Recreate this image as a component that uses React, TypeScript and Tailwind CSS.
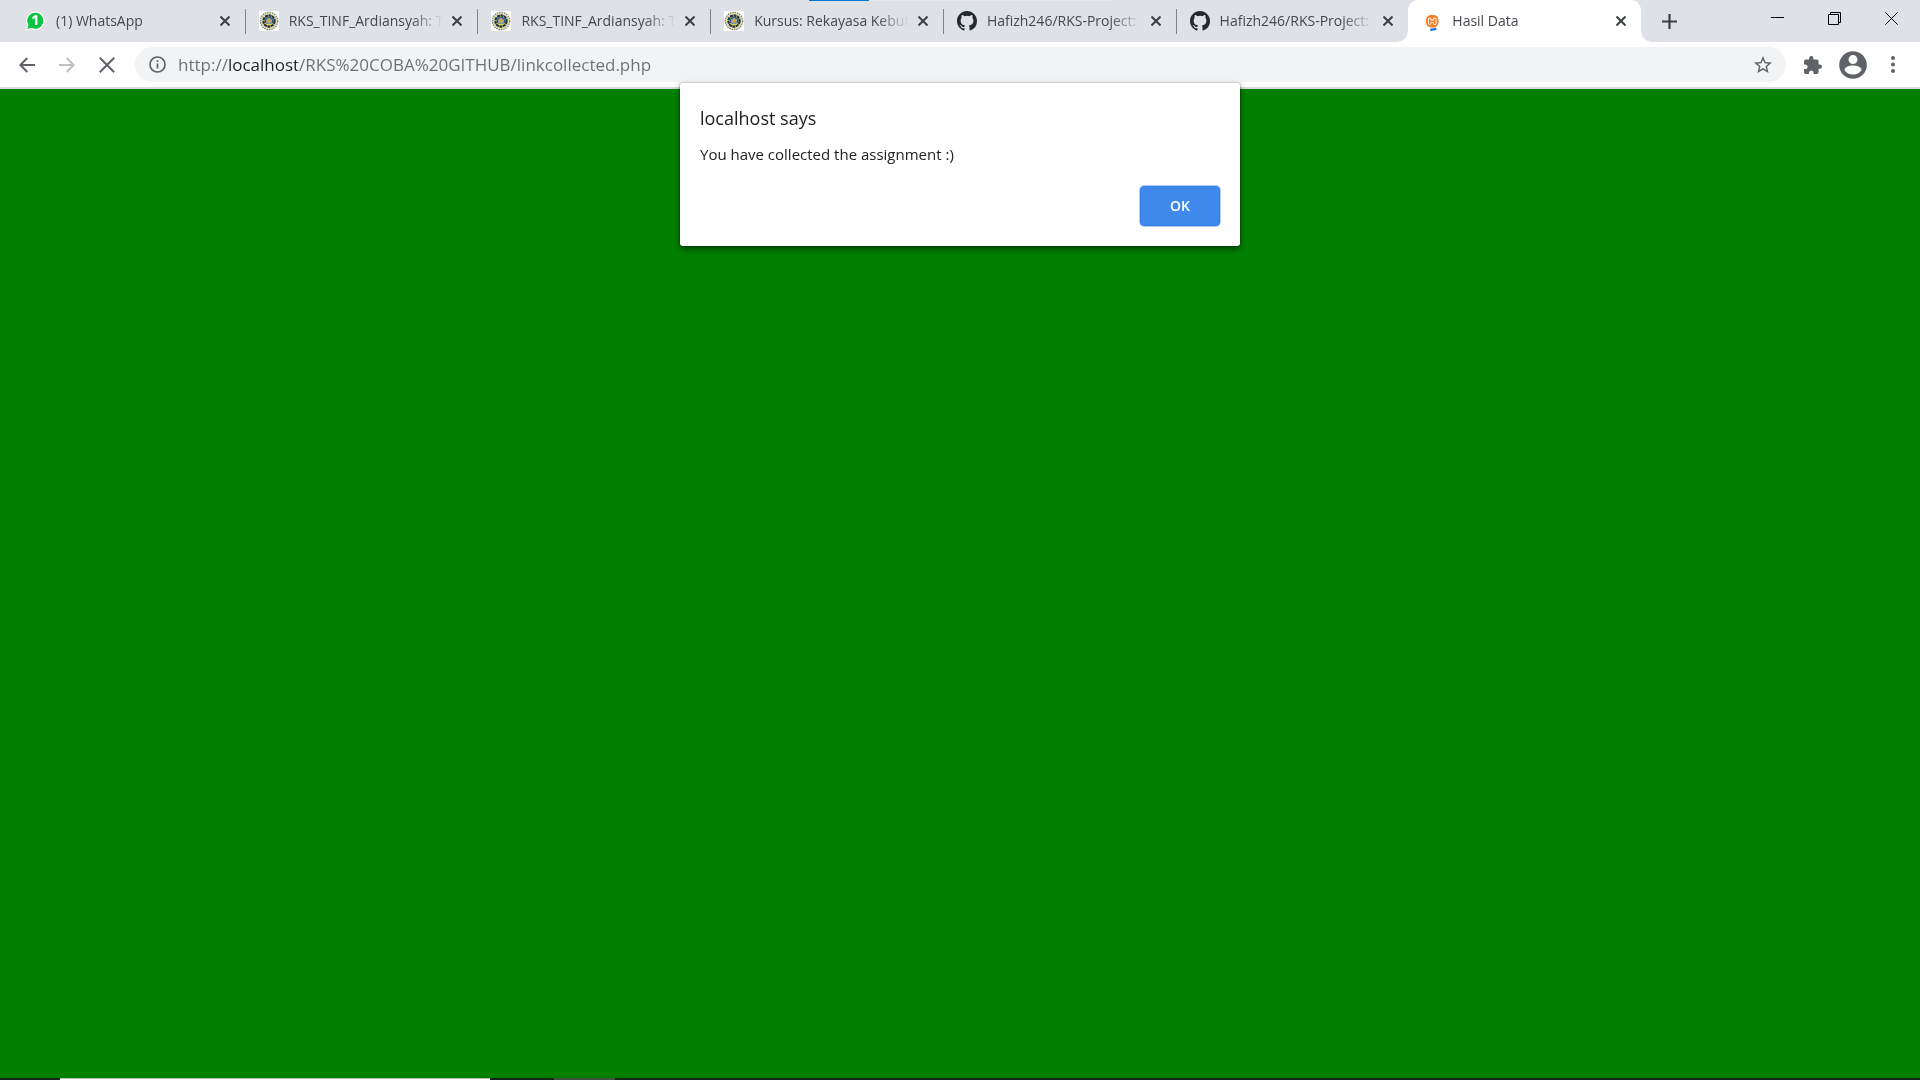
import React from "react";

type IconKind = "whatsapp" | "campus" | "github" | "xampp";

const tabs: { title: string; icon: IconKind; separator?: boolean; active?: boolean }[] = [
  { title: "(1) WhatsApp", icon: "whatsapp", separator: true },
  { title: "RKS_TINF_Ardiansyah: T", icon: "campus", separator: true },
  { title: "RKS_TINF_Ardiansyah: T", icon: "campus", separator: true },
  { title: "Kursus: Rekayasa Kebut", icon: "campus", separator: true },
  { title: "Hafizh246/RKS-Project:", icon: "github", separator: true },
  { title: "Hafizh246/RKS-Project:", icon: "github" },
  { title: "Hasil Data", icon: "xampp", active: true },
];

function Favicon({ kind }: { kind: IconKind }) {
  if (kind === "whatsapp") {
    return (
      <svg className="size-5 shrink-0" viewBox="0 0 20 20" aria-hidden="true">
        <path d="M9.500 0.600a9.200 9.200 0 1 1-4.400 17.300L0 19.400l1.300-5.200A9.200 9.200 0 0 1 9.500 0.600z" fill="#fff" />
        <path d="M9.500 1.800a8 8 0 1 1-4 15L1.400 18l1.100-4A8 8 0 0 1 9.500 1.800z" fill="#0dc143" />
        <path d="M6.500 7.300L9.200 5.400h1.100v8.600" fill="none" stroke="#fff" strokeWidth="2.200" />
      </svg>
    );
  }
  if (kind === "campus") {
    return (
      <svg className="size-5 shrink-0" viewBox="0 0 20 20" aria-hidden="true">
        <rect width="20" height="20" fill="#fff" />
        <circle cx="10" cy="10" r="8.600" fill="none" stroke="#7f8478" strokeWidth="1.400" strokeDasharray="1.600 0.800" />
        <circle cx="10" cy="10" r="7.400" fill="#fff" stroke="#d8cf6a" strokeWidth="1" />
        <circle cx="10" cy="10" r="5.600" fill="#c8b84a" stroke="#1c3048" strokeWidth="2.200" strokeDasharray="3 0.600" />
        <circle cx="10" cy="10" r="4.200" fill="#31567c" />
        <path d="M7 8.400l3-1.800 3 1.800v3.200l-3 1.600-3-1.600z" fill="#86a2b4" />
        <circle cx="10" cy="9.800" r="1.700" fill="#e8a530" />
        <path d="M6.500 12.400q3.500 2.400 7 0" stroke="#e3cf45" strokeWidth="1.200" fill="none" />
      </svg>
    );
  }
  if (kind === "github") {
    return (
      <svg className="size-5 shrink-0" viewBox="0 0 16 16" fill="#24292e" aria-hidden="true">
        <path d="M8 0C3.580 0 0 3.580 0 8c0 3.540 2.290 6.530 5.470 7.590.4.070.55-.17.55-.38 0-.19-.01-.82-.01-1.490-2.010.37-2.530-.49-2.690-.94-.09-.23-.48-.94-.82-1.130-.28-.15-.68-.52-.01-.53.63-.01 1.080.58 1.230.82.72 1.210 1.870.87 2.330.66.07-.52.28-.87.51-1.070-1.780-.2-3.640-.89-3.640-3.950 0-.87.31-1.590.82-2.150-.08-.2-.36-1.020.08-2.120 0 0 .67-.21 2.200.82a7.600 7.600 0 0 1 4 0c1.530-1.040 2.200-.82 2.200-.82.44 1.100.16 1.920.08 2.120.51.56.82 1.270.82 2.150 0 3.070-1.870 3.750-3.650 3.950.29.25.54.73.54 1.480 0 1.070-.01 1.930-.01 2.200 0 .21.15.46.55.38A8.010 8.010 0 0 0 16 8c0-4.420-3.580-8-8-8z" />
      </svg>
    );
  }
  return (
    <svg className="size-5 shrink-0" viewBox="0 0 20 20" fill="none" aria-hidden="true">
      <rect x="4" y="4" width="12.500" height="12.400" rx="5" fill="#fb7a24" />
      <path d="M7.700 8.300v4M12.800 8.300v4M7.700 10.300h5.100" stroke="#fff" strokeWidth="3.600" strokeLinecap="round" />
      <path d="M7.700 8.300v4M12.800 8.300v4M7.700 10.300h5.100" stroke="#fb7a24" strokeWidth="1.700" strokeLinecap="round" />
      <path d="M8.300 18.700q2.700.2 6-1" stroke="#1a73e8" strokeWidth="2.500" />
    </svg>
  );
}

function BrowserTab({ tab }: { tab: (typeof tabs)[number] }) {
  return (
    <li className={tab.active ? "relative flex h-full min-w-0 flex-1 items-center rounded-t-[10px] bg-white pr-[10px] pl-[14px]" : "relative flex h-full min-w-0 flex-1 items-center pr-[10px] pl-[14px]"}>
      {tab.active && (
        <>
          <span className="absolute right-full bottom-0 size-[10px] bg-[radial-gradient(circle_at_0_0,transparent_9px,#fff_10px)]" />
          <span className="absolute bottom-0 left-full size-[10px] bg-[radial-gradient(circle_at_100%_0,transparent_9px,#fff_10px)]" />
        </>
      )}
      <button type="button" className="flex min-w-0 flex-1 items-center gap-[10px]">
        <Favicon kind={tab.icon} />
        <span className="min-w-0 flex-1 overflow-hidden text-left text-[14px] leading-5 whitespace-nowrap text-[#45494d] [mask-image:linear-gradient(to_right,#000_calc(100%-36px),transparent_calc(100%-4px))]">
          {tab.title}
        </span>
      </button>
      <button type="button" aria-label={"Close " + tab.title} className="flex size-5 shrink-0 items-center justify-center">
        <svg className="size-[10px]" viewBox="0 0 10 10" stroke="#3c4043" strokeWidth="2" aria-hidden="true">
          <path d="M0.500 0.500l9 9M9.500 0.500l-9 9" />
        </svg>
      </button>
      {tab.separator && <span className="absolute top-[9px] left-full h-[25px] w-px bg-[#808387]" />}
    </li>
  );
}

export default function App() {
  return (
    <div className="flex min-h-screen flex-col bg-[#008000] font-['Open_Sans',sans-serif]">
      <header className="relative">
        <div className="absolute top-0 left-[809px] flex h-px w-[301px] bg-[#e9e9ea]">
          <span className="w-[60px] bg-[#0078d7]" />
        </div>
        <div className="flex h-[42px] items-center bg-[#dee1e6] pl-3">
          <ul className="flex h-full max-w-[1629px] flex-1">
            {tabs.map((tab, i) => (
              <BrowserTab key={i} tab={tab} />
            ))}
          </ul>
          <button type="button" aria-label="New tab" className="ml-[18px] flex size-5 items-center justify-center">
            <svg className="size-[15px]" viewBox="0 0 15 15" stroke="#3c4043" strokeWidth="2.200" aria-hidden="true">
              <path d="M7.500 0v15M0 7.500h15" />
            </svg>
          </button>
          <div className="ml-auto flex h-[37px] self-start text-black">
            <button type="button" aria-label="Minimize" className="flex w-[57px] items-center justify-center">
              <svg className="size-[13px]" viewBox="0 0 13 13" stroke="currentColor" aria-hidden="true">
                <path d="M0 5.500h13" />
              </svg>
            </button>
            <button type="button" aria-label="Restore" className="flex w-[57px] items-center justify-center">
              <svg className="size-[13px]" viewBox="0 0 13 13" fill="none" stroke="currentColor" aria-hidden="true">
                <path d="M0.500 2.500h10v10h-10zM2.500 2.500v-2h10v10h-2" />
              </svg>
            </button>
            <button type="button" aria-label="Close window" className="flex w-[57px] items-center justify-center">
              <svg className="size-[13px]" viewBox="0 0 13 13" stroke="currentColor" aria-hidden="true">
                <path d="M0.300 0.300l12.400 12.400M12.700 0.300L0.300 12.700" />
              </svg>
            </button>
          </div>
        </div>

        <nav className="flex h-[47px] items-center border-b-2 border-[#d9dadd] bg-white pr-[7px] pl-[7px]">
          <button type="button" aria-label="Back" className="flex w-10 justify-center">
            <svg className="size-4" viewBox="0 0 16 16" fill="none" stroke="#5f6368" strokeWidth="2" aria-hidden="true">
              <path d="M16 8H1.500M8.300 1L1.400 8l6.900 7" />
            </svg>
          </button>
          <button type="button" aria-label="Forward" className="flex w-10 justify-center">
            <svg className="size-4" viewBox="0 0 16 16" fill="none" stroke="#bdbfc1" strokeWidth="2" aria-hidden="true">
              <path d="M0 8h14.500M7.700 1l6.900 7-6.900 7" />
            </svg>
          </button>
          <button type="button" aria-label="Stop loading" className="flex w-10 justify-center">
            <svg className="size-4" viewBox="0 0 16 16" stroke="#5f6368" strokeWidth="2" aria-hidden="true">
              <path d="M0.800 0.800l14.400 14.400M15.200 0.800L0.800 15.200" />
            </svg>
          </button>
          <div className="ml-2 flex h-[35px] flex-1 items-center rounded-full bg-[#f1f3f4] pr-[14px] pl-[14px]">
            <button type="button" aria-label="View site information">
              <svg className="size-[17px]" viewBox="0 0 17 17" fill="none" stroke="#5f6368" strokeWidth="1.700" aria-hidden="true">
                <circle cx="8.500" cy="8.500" r="7.500" />
                <path d="M8.500 7.500v5M8.500 4.300v1.800" />
              </svg>
            </button>
            <input
              type="text"
              aria-label="Address"
              defaultValue="http://localhost/RKS%20COBA%20GITHUB/linkcollected.php"
              className="ml-3 h-7 min-w-0 flex-1 bg-[linear-gradient(to_right,#6b6f73_50px,#202124_50px,#202124_119px,#6b6f73_119px)] bg-clip-text text-[17px] leading-7 text-transparent outline-none"
            />
            <button type="button" aria-label="Bookmark this tab">
              <svg className="size-[18px]" viewBox="2 2 20 20" fill="#5f6368" aria-hidden="true">
                <path d="M22 9.240l-7.190-.62L12 2 9.190 8.630 2 9.240l5.460 4.730L5.820 21 12 17.270 18.180 21l-1.630-7.030L22 9.240zM12 15.400l-3.760 2.270 1-4.280-3.320-2.880 4.380-.38L12 6.100l1.710 4.040 4.380.38-3.320 2.880 1 4.280L12 15.400z" />
              </svg>
            </button>
          </div>
          <button type="button" aria-label="Extensions" className="ml-[7px] flex w-10 justify-center">
            <svg className="size-[18px]" viewBox="2 1 21 21" fill="#5f6368" aria-hidden="true">
              <path d="M20.500 11H19V7c0-1.100-.9-2-2-2h-4V3.500a2.500 2.500 0 0 0-5 0V5H4c-1.100 0-1.990.9-1.990 2v3.800H3.500c1.490 0 2.700 1.210 2.700 2.700s-1.210 2.700-2.700 2.700H2V20c0 1.100.9 2 2 2h3.800v-1.500c0-1.490 1.210-2.700 2.700-2.700s2.700 1.210 2.700 2.700V22H17c1.100 0 2-.9 2-2v-4h1.500a2.500 2.500 0 0 0 0-5z" />
            </svg>
          </button>
          <button type="button" aria-label="Profile" className="flex w-10 justify-center">
            <svg className="size-7" viewBox="0 0 28 28" aria-hidden="true">
              <circle cx="14" cy="14" r="13.800" fill="#5f6368" />
              <circle cx="14" cy="8.600" r="4.500" fill="#fff" />
              <path d="M5.500 18.900c0-2.900 5.200-4.300 8.500-4.300s8.500 1.400 8.500 4.300c-1.700 2.900-4.900 4.600-8.500 4.600s-6.800-1.700-8.500-4.600z" fill="#fff" />
            </svg>
          </button>
          <button type="button" aria-label="Menu" className="flex w-10 justify-center">
            <svg className="h-[17px] w-1" viewBox="0 0 4 17" fill="#5f6368" aria-hidden="true">
              <circle cx="2" cy="2" r="2" />
              <circle cx="2" cy="8.500" r="2" />
              <circle cx="2" cy="15" r="2" />
            </svg>
          </button>
        </nav>
      </header>

      <main className="flex-1" />

      <footer className="flex h-[2px] bg-[#14261a]">
        <span className="ml-[60px] w-[430px] border-t border-[#b9b9b9] bg-white" />
        <span className="ml-16 w-[61px] bg-[#3d5142]" />
      </footer>

      <div
        role="alertdialog"
        aria-labelledby="alert-title"
        aria-describedby="alert-body"
        className="fixed top-[83px] left-1/2 flex w-[560px] -translate-x-1/2 flex-col rounded-[3px] bg-white px-5 pt-[19px] pb-5 text-[#202124] shadow-[0_0_1px_1px_rgba(0,0,0,0.15),0_3px_6px_rgba(0,0,0,0.5)]"
      >
        <h1 id="alert-title" className="text-[18px] leading-8">localhost says</h1>
        <p id="alert-body" className="mt-2 text-[15px] leading-6">You have collected the assignment :)</p>
        <button
          type="button"
          className="mt-5 h-10 w-20 self-end rounded-[4px] border border-[#3380e8] bg-[#4089ec] pb-[2px] text-[14px] font-semibold text-white shadow-[0_0_0_1px_#b3cff7]"
        >
          OK
        </button>
      </div>
    </div>
  );
}
